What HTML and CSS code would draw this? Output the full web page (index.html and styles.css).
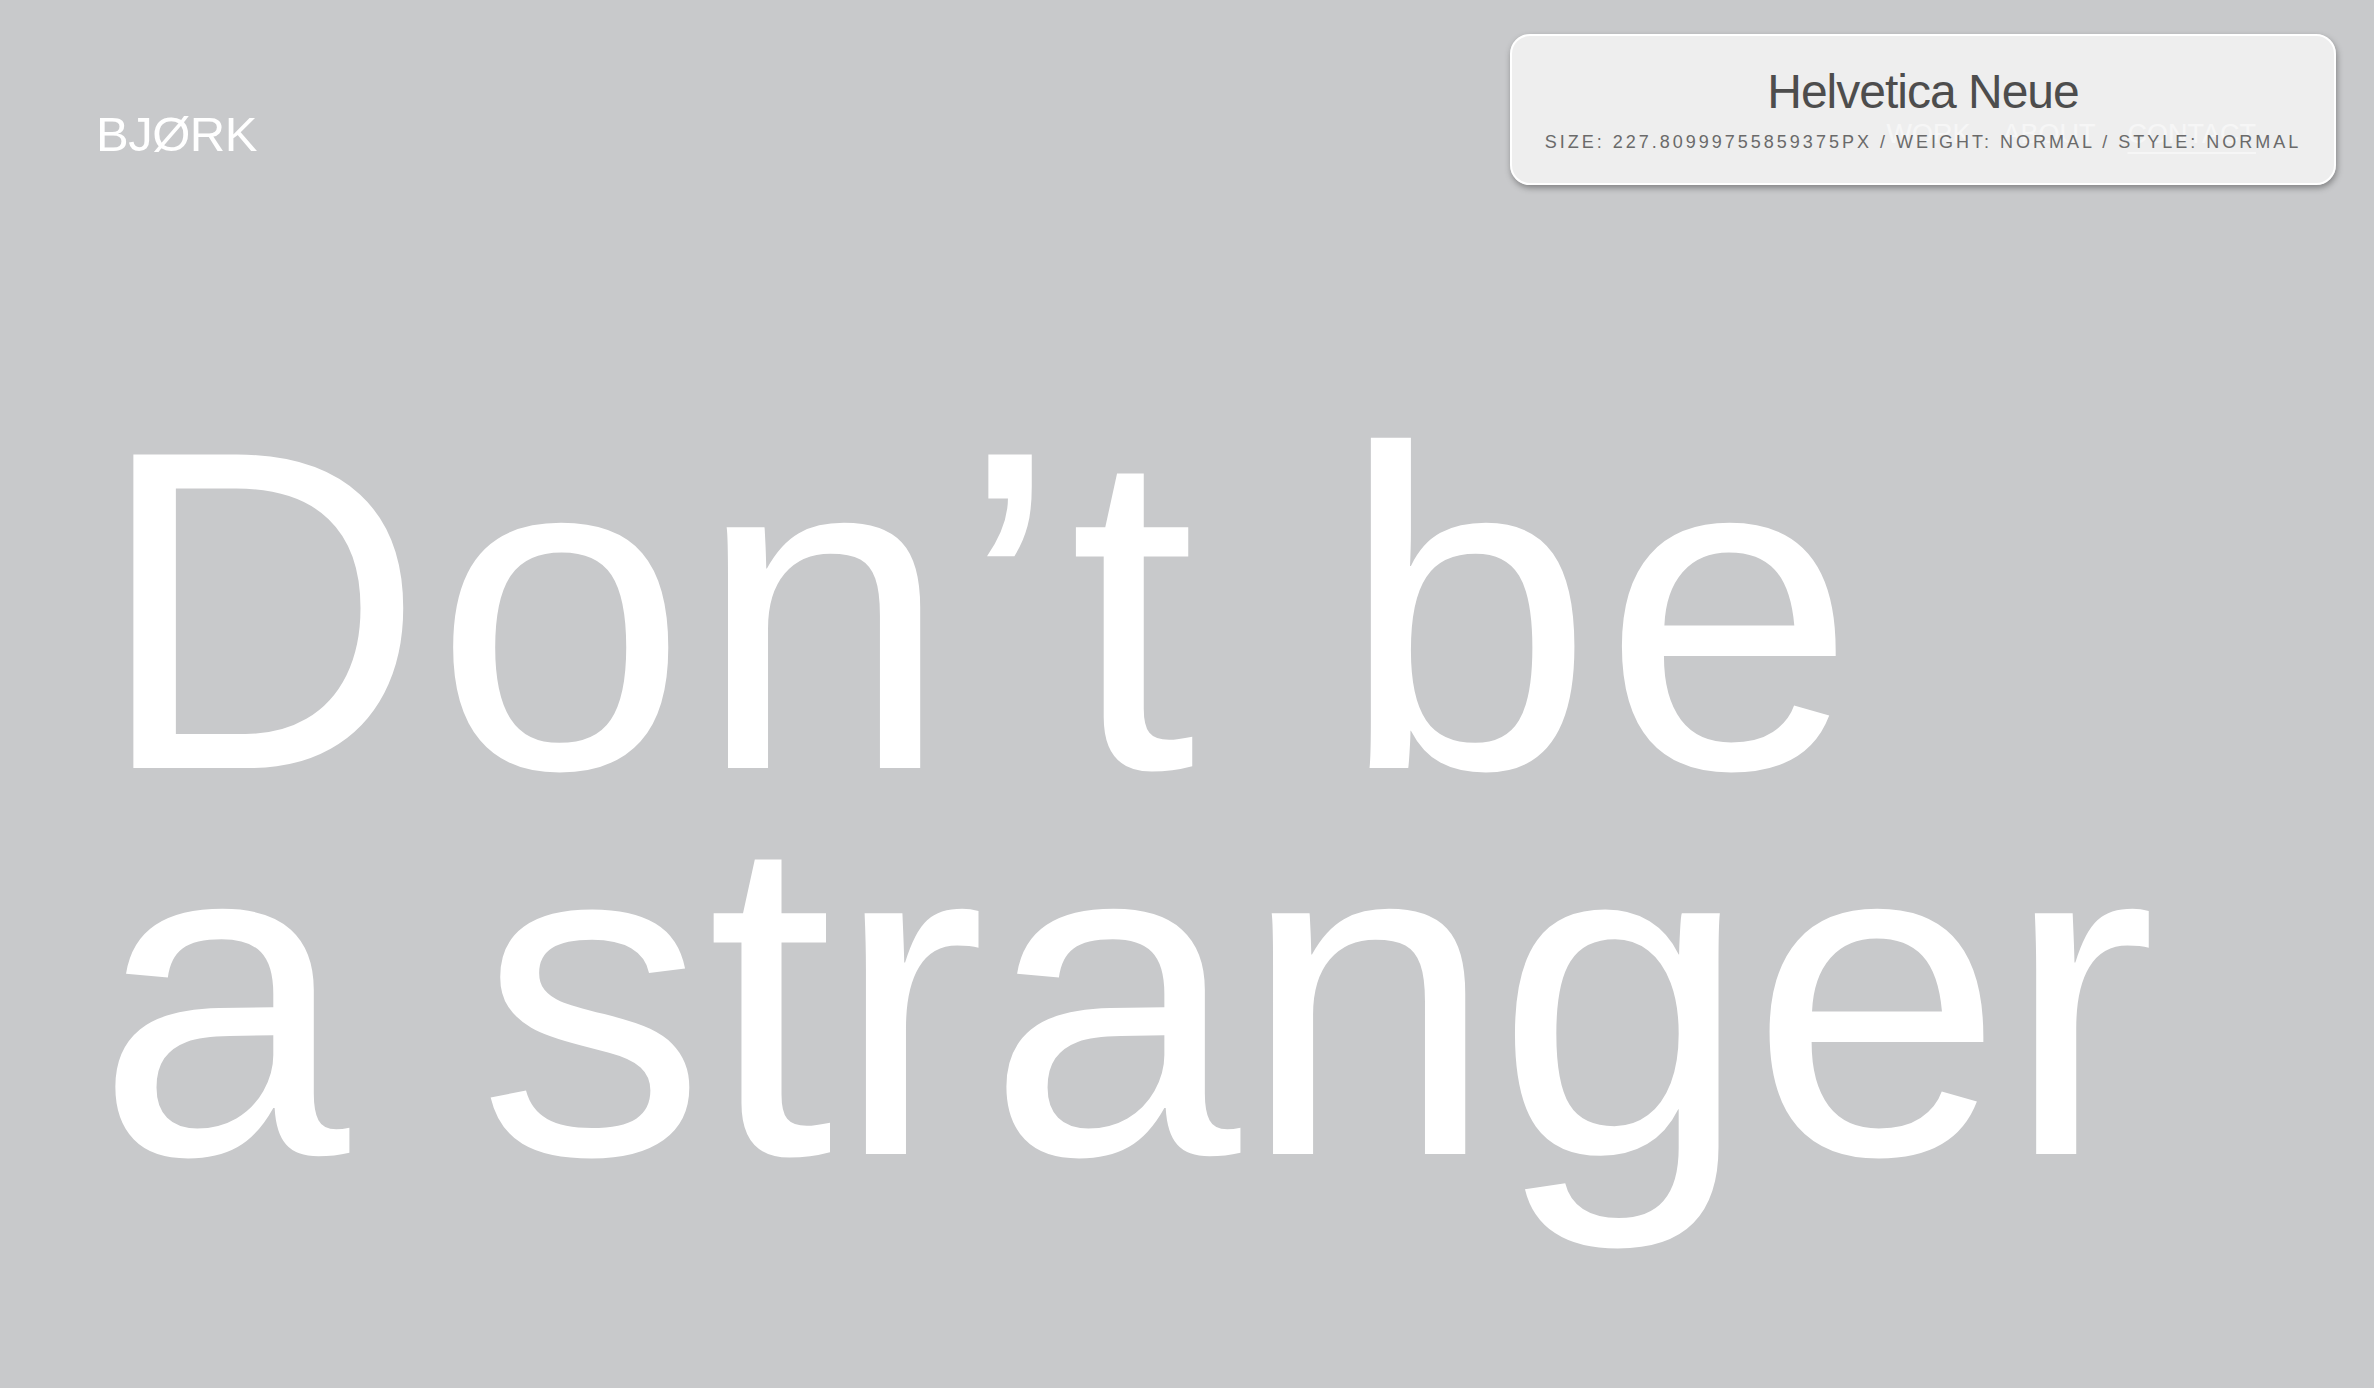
FILE: index.html
```html
<!DOCTYPE html>
<html lang="en">
<head>
<meta charset="utf-8">
<title>BJØRK — Contact</title>
<link rel="stylesheet" href="styles.css">
</head>
<body>
<header class="site-header">
  <a class="logo" href="#">BJØRK</a>
  <nav class="nav">
    <a class="nav-link" href="#">WORK</a>
    <a class="nav-link" href="#">ABOUT</a>
    <a class="nav-link is-active" href="#">CONTACT</a>
  </nav>
</header>
<main class="hero">
  <h1 class="headline"><span class="line line-first">Don’t be</span><span class="line line-second">a stranger</span></h1>
</main>
<div class="font-tip">
  <div class="font-tip-name">Helvetica Neue</div>
  <div class="font-tip-meta">SIZE: 227.80999755859375PX / WEIGHT: NORMAL / STYLE: NORMAL</div>
</div>
</body>
</html>
```
FILE: styles.css
```css
html, body {
  margin: 0;
  padding: 0;
}
body {
  background: #c8c9cb;
  color: #ffffff;
  font-family: "Liberation Sans", Arial, sans-serif;
  min-height: 1388px;
  overflow: hidden;
}
a {
  color: inherit;
  text-decoration: none;
}
.site-header {
  display: flex;
  justify-content: space-between;
  align-items: center;
  padding: 110px 118px 0 96px;
}
.logo {
  font-size: 49px;
  line-height: 1;
  letter-spacing: -0.5px;
}
.nav {
  display: flex;
  gap: 32px;
  font-size: 27px;
  line-height: 1;
}
.nav-link.is-active {
  text-decoration: underline;
  text-decoration-thickness: 2px;
  text-underline-offset: 9px;
}
.hero {
  padding: 0 96px;
  margin-top: 259px;
}
.headline {
  margin: 0;
  font-weight: normal;
  font-size: 455.6px;
  line-height: 386px;
}
.line {
  display: block;
  white-space: nowrap;
}
.line-first {
  letter-spacing: 9px;
}
.line-second {
  letter-spacing: 1px;
}
.font-tip {
  position: absolute;
  top: 34px;
  right: 38px;
  width: 826px;
  box-sizing: border-box;
  padding: 32px 20px;
  display: flex;
  flex-direction: column;
  align-items: center;
  gap: 17px;
  background: rgba(245, 245, 245, 0.85);
  border: 2px solid #ffffff;
  border-radius: 20px;
  box-shadow: 1px 3px 6px rgba(0, 0, 0, 0.35);
}
.font-tip-name {
  font-size: 48px;
  line-height: 1;
  letter-spacing: -1px;
  color: #4d4d4d;
}
.font-tip-meta {
  font-size: 18px;
  line-height: 1;
  letter-spacing: 3px;
  color: #6a6a6a;
  white-space: nowrap;
}
```
